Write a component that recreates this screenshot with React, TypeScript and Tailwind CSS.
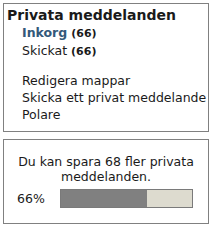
export default function App() {
  const pct = 66;
  return (
    <div className="w-[215px] h-[228px] bg-white pt-[3px] pl-[3px] text-[12.5px] leading-[17px] text-[#1a1a1a] whitespace-nowrap font-['DejaVu_Sans',Verdana,sans-serif]">
      {/* Folder list */}
      <div className="w-[206px] h-[129px] border border-[#808080] pl-[3px] pt-[3px]">
        <div className="font-bold text-[14px]">Privata meddelanden</div>
        <div className="pl-[15px]">
          <div>
            <span className="font-bold text-[#33597a]">Inkorg</span>{" "}
            <span className="font-bold text-[11px]">(66)</span>
          </div>
          <div>
            Skickat <span className="font-bold text-[11px]">(66)</span>
          </div>
          <div className="mt-[12px]">Redigera mappar</div>
          <div>Skicka ett privat meddelande</div>
          <div>Polare</div>
        </div>
      </div>

      {/* Storage quota */}
      <div className="w-[206px] h-[85px] mt-[7px] border border-[#808080] pt-[14px]">
        <div className="text-center leading-[15px]">
          Du kan spara 68 fler privata
          <br />
          meddelanden.
        </div>
        <div className="flex items-center mt-[5px] pl-[13px]">
          <span className="w-[43px]">{pct}%</span>
          <div className="w-[133px] h-[19px] border border-[#7a7a7a] bg-[#dddbcf]">
            <div className="h-full bg-[#808080]" style={{ width: `${pct}%` }} />
          </div>
        </div>
      </div>
    </div>
  );
}
